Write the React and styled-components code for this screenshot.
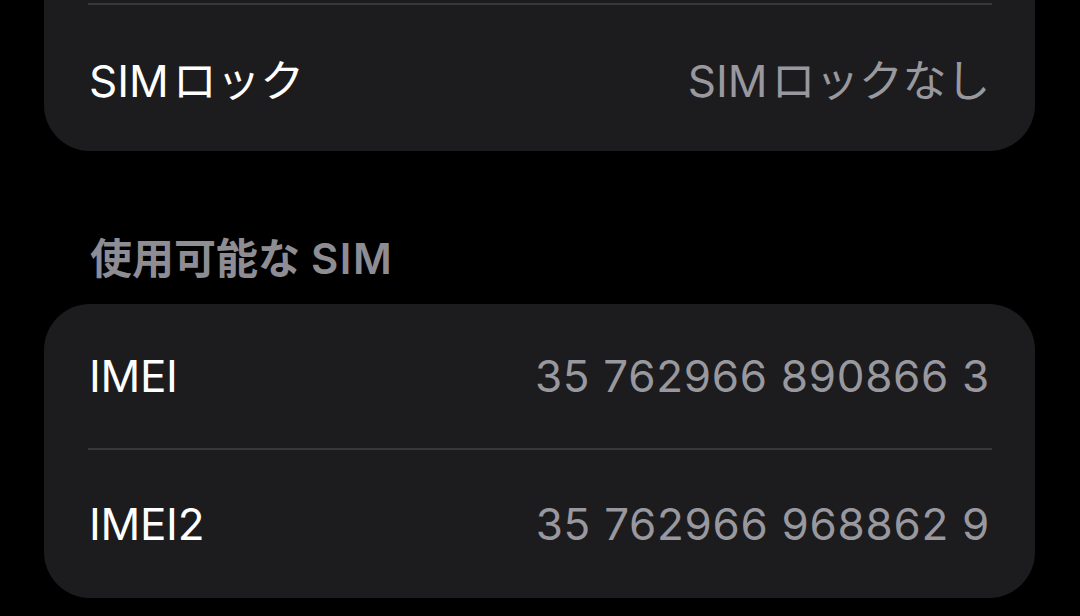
import React from "react";
import styled, { createGlobalStyle } from "styled-components";

const GlobalStyle = createGlobalStyle`
  html, body {
    margin: 0;
    padding: 0;
    background: #000000;
  }
  body {
    font-family: Inter, "Noto Sans CJK JP", sans-serif;
    -webkit-font-smoothing: antialiased;
  }
`;

const Page = styled.div`
  width: 1080px;
  height: 616px;
  overflow: hidden;
  background: #000000;
  padding: 0 45px 0 44px;
  box-sizing: border-box;
`;

const Card = styled.div`
  background: #1c1c1e;
  border-radius: 46px;
  padding: 0 43px 0 44px;
  margin-top: ${(p) => p.$offset || 0}px;
  padding-top: ${(p) => p.$top || 0}px;
`;

const Row = styled.div`
  display: flex;
  align-items: center;
  justify-content: space-between;
  height: ${(p) => p.$h || 145}px;
  border-top: ${(p) => (p.$line ? "2px solid #38383a" : "none")};
  padding-left: 1px;
  padding-right: 2px;
`;

const Label = styled.span`
  color: #ffffff;
  font-size: 44px;
  letter-spacing: -0.3px;
`;

const Value = styled.span`
  color: #98989e;
  font-size: 44px;
  letter-spacing: ${(p) => (p.$digits ? "0.7px" : "-0.3px")};
`;

// latin run next to japanese gets a little extra room, like iOS does
const Latin = styled.span`
  margin-left: ${(p) => p.$before || 0}px;
  margin-right: ${(p) => p.$after || 0}px;
  letter-spacing: ${(p) => p.$spacing || 0}px;
`;

const SectionHeader = styled.div`
  color: #8d8d93;
  font-size: 42px;
  font-weight: 600;
  line-height: 48px;
  padding: 84px 0 21px 46px;
`;

export default function App() {
  return (
    <>
      <GlobalStyle />
      <Page>
        <Card $offset={-60} $top={63}>
          <Row $line $h={146}>
            <Label>
              <Latin $after={4}>SIM</Latin>ロック
            </Label>
            <Value>
              <Latin $after={4}>SIM</Latin>ロックなし
            </Value>
          </Row>
        </Card>
        <SectionHeader>
          使用可能な<Latin $before={11} $spacing={1.5}>SIM</Latin>
        </SectionHeader>
        <Card>
          <Row $h={144}>
            <Label>IMEI</Label>
            <Value $digits>35 762966 890866 3</Value>
          </Row>
          <Row $line $h={148}>
            <Label>IMEI2</Label>
            <Value $digits>35 762966 968862 9</Value>
          </Row>
        </Card>
      </Page>
    </>
  );
}
